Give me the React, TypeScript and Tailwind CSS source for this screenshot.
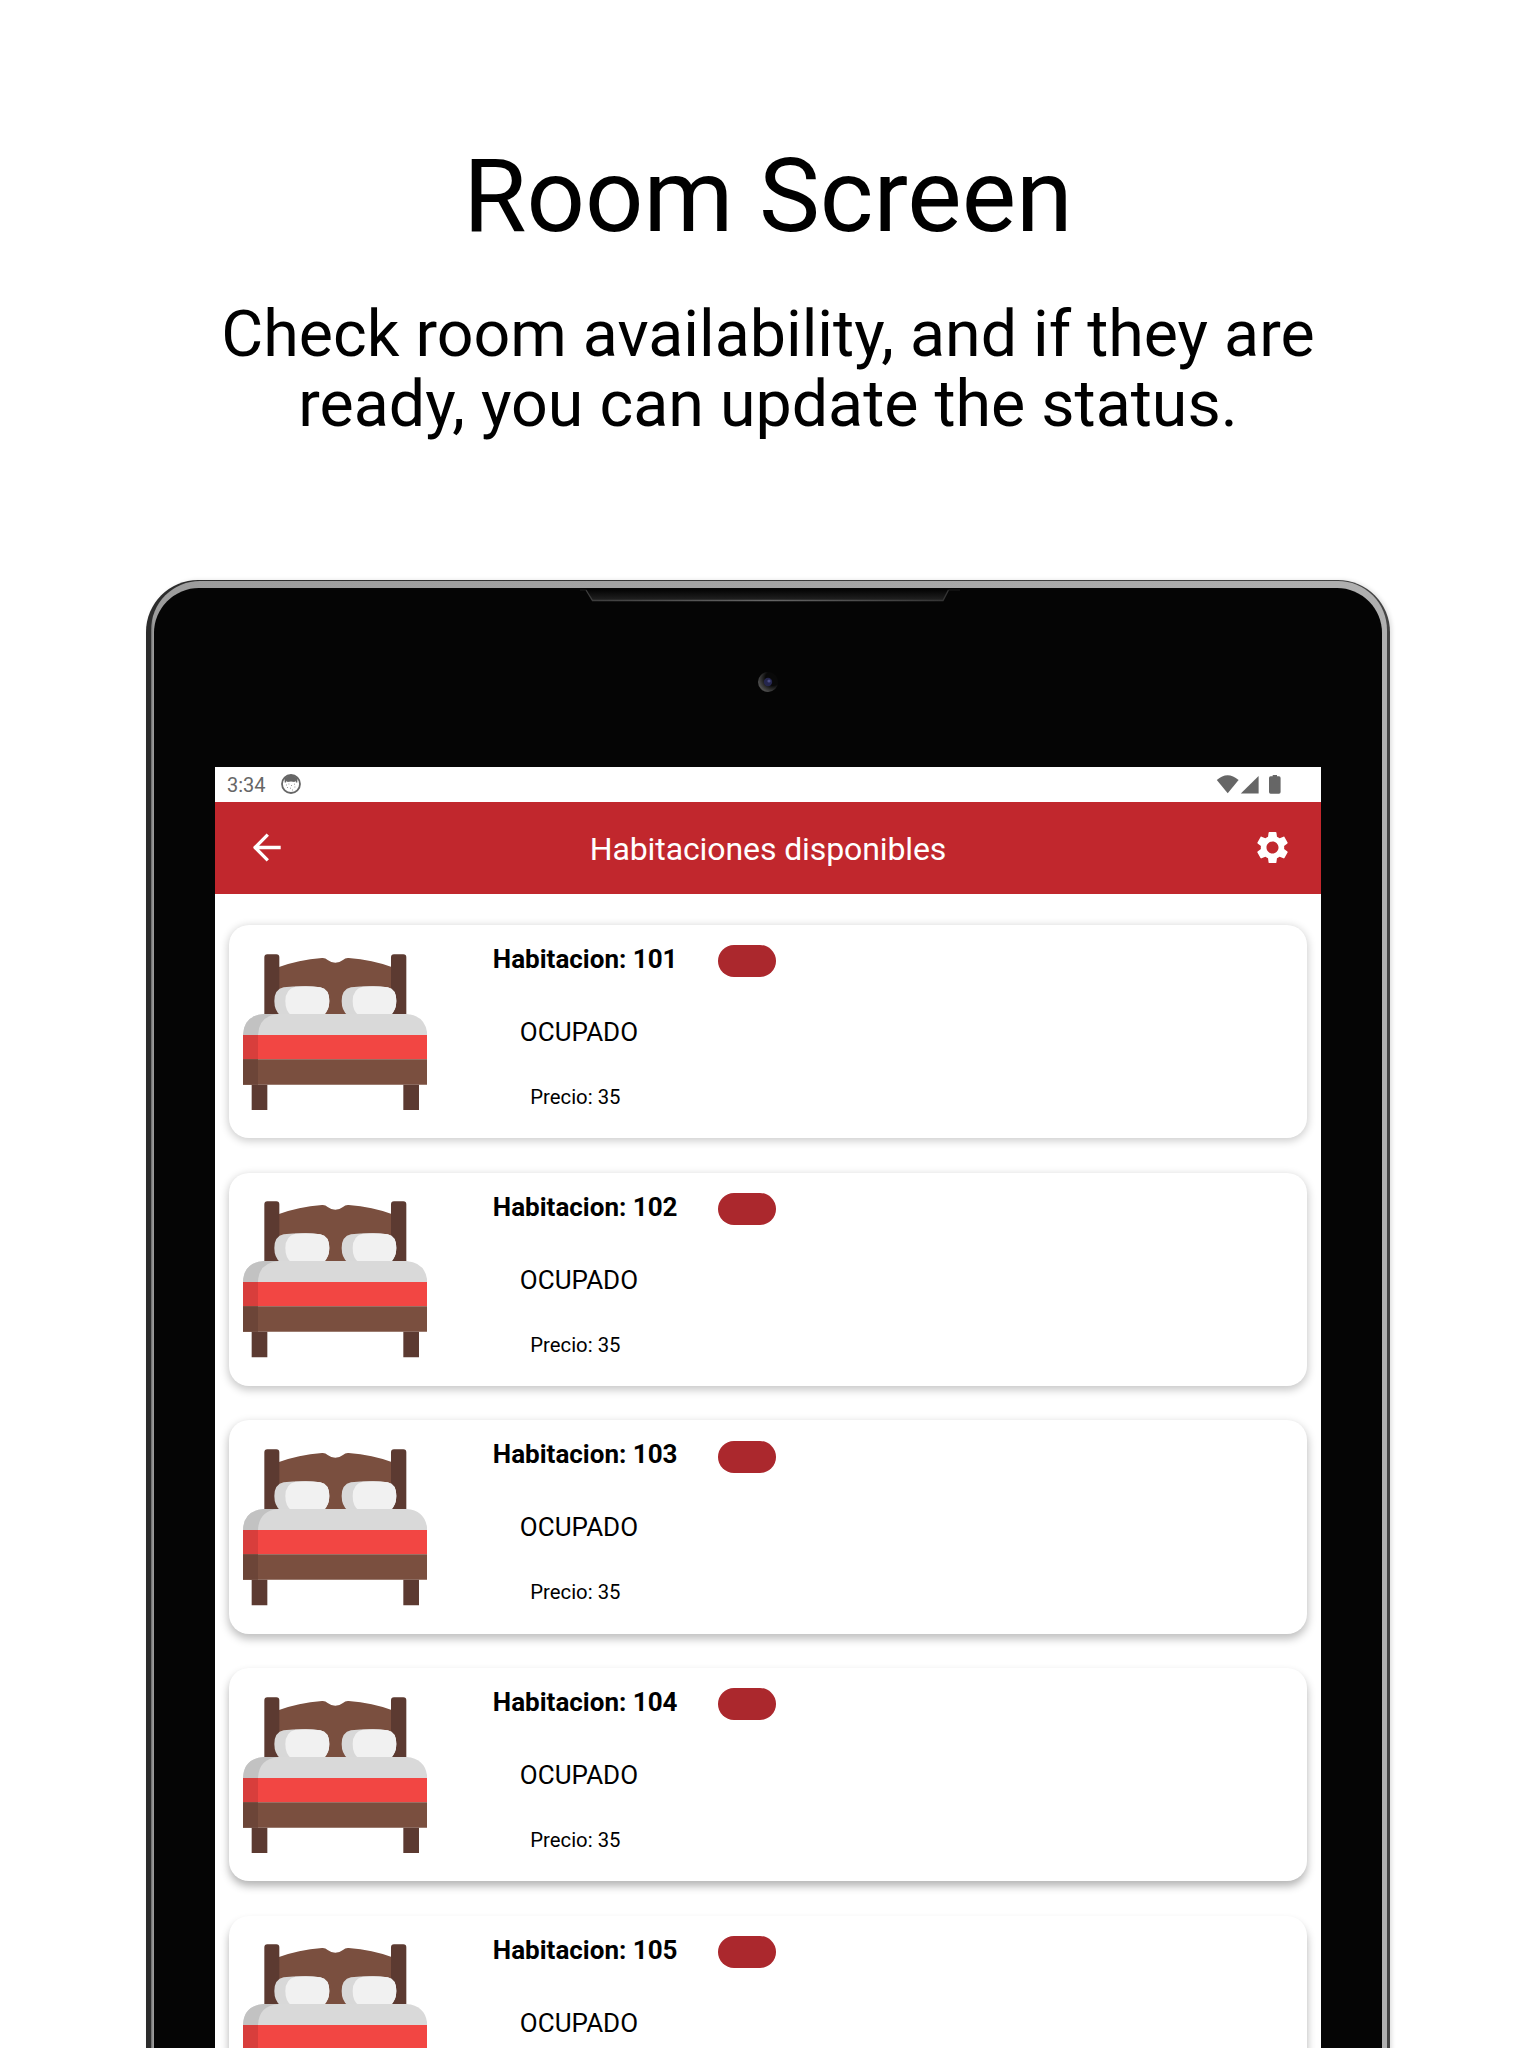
const rooms = [
  { number: 101, status: 'OCUPADO', price: 35, shadow: 'shadow-[0_2px_8px_1px_rgba(0,0,0,0.20)]' },
  { number: 102, status: 'OCUPADO', price: 35, shadow: 'shadow-[0_3px_8px_1px_rgba(0,0,0,0.22)]' },
  { number: 103, status: 'OCUPADO', price: 35, shadow: 'shadow-[0_4px_8px_1px_rgba(0,0,0,0.25)]' },
  { number: 104, status: 'OCUPADO', price: 35, shadow: 'shadow-[0_5px_9px_0px_rgba(0,0,0,0.30)]' },
  { number: 105, status: 'OCUPADO', price: 35, shadow: 'shadow-[0_6px_9px_0px_rgba(0,0,0,0.30)]' },
];

function Bed() {
  return (
    <svg className="ml-3.5 mt-[28.7px] h-[156.67px] w-[184.33px] shrink-0" viewBox="0 0 553 470">
      <path d="M108 39Q165 18 237 12Q247 11 254 18Q277 35 300 18Q307 11 317 12Q390 18 446 39V185H108Z" fill="#7a4f3f" />
      <path d="M64 184V10Q64 1 73 1H100Q109 1 109 10V184ZM444 184V10Q444 1 453 1H481Q490 1 490 10V184Z" fill="#5c3a31" />
      <path d="M112 184Q94 170 94 141Q94 106 122 100Q178 94 232 100Q259 105 259 141Q259 170 241 184ZM314 184Q296 170 296 141Q296 106 324 100Q380 94 434 100Q460 105 460 141Q460 170 442 184Z" fill="#d8d8d8" />
      <path d="M145 184Q127 171 127 141Q127 105 157 98Q200 95 232 100Q259 105 259 141Q259 170 241 184ZM347 184Q329 171 329 141Q329 105 359 98Q402 95 434 100Q460 105 460 141Q460 170 442 184Z" fill="#f1f1f1" />
      <path d="M0 243Q2 185 62 180H491Q549 185 553 243Z" fill="#d9d9d9" />
      <path d="M0 243Q2 185 62 180H107Q47 185 45 243Z" fill="#c2c2c2" />
      <path d="M0 243H553V316H0Z" fill="#f24643" />
      <path d="M0 243H45V316H0Z" fill="#d83e3c" />
      <path d="M0 316H553V392H0Z" fill="#7a4f3f" />
      <path d="M0 316H45V392H0Z" fill="#6c4538" />
      <path d="M26 392H73V469H26ZM481 392H528V469H481Z" fill="#5c3a31" />
    </svg>
  );
}

function RoomCard({ number, status, price, shadow }: (typeof rooms)[number]) {
  return (
    <article className={`flex h-[213.33px] shrink-0 rounded-[20px] bg-white text-black ${shadow}`}>
      <Bed />
      <div className="ml-[65.5px] flex flex-col">
        <div className="mt-[17px] flex h-[34px] items-center">
          <h2 className="w-[184px] whitespace-nowrap text-[26px] font-bold leading-[34px]">Habitacion: {number}</h2>
          <span className="ml-[41.5px] mt-[4.6px] h-8 w-[58px] rounded-[16px] bg-[#ab282d]" />
        </div>
        <p className="ml-[27px] mt-[39px] text-[26px] leading-[34px]">{status}</p>
        <p className="ml-[37.5px] mt-[34px] text-[20.3px] leading-[28px]">Precio: {price}</p>
      </div>
    </article>
  );
}

function StatusBar() {
  return (
    <div className="flex h-[34.5px] shrink-0 items-center pl-3 pr-[39.5px] text-[#666]">
      <span className="mt-[2px] w-[40px] text-[20px] leading-[34px]">3:34</span>
      <svg className="ml-[14px] h-5 w-5" viewBox="0 0 20 20">
        <circle cx="10" cy="10" r="9" fill="none" stroke="currentColor" strokeWidth="1.800" />
        <path d="M3.500 4.500Q10-2.500 16.500 4.500L16.300 8.400H15L14.300 6.800 13.500 8Q10 7.200 6.500 8L5.700 6.800 5 8.400H3.700Z" fill="currentColor" />
        <path d="M5 11h.8M7.500 10h.8M10 11.500h.8M13 10.200h.8M6 13.500h.8M9 14.200h.8M13.500 13h.8M11 16h.8" stroke="currentColor" strokeWidth=".8" />
      </svg>
      <svg className="ml-auto h-[34px] w-[66px]" viewBox="0 0 66 34" fill="currentColor">
        <path d="M.8 13Q11.500 3.500 22.600 13L11.700 26.300Z" />
        <path d="M42.600 9V26.500H24.800Z" />
        <path d="M56.700 8H61V9.300H63Q64.600 9.300 64.600 11V25Q64.600 26.800 63 26.800H54.600Q53 26.800 53 25V11Q53 9.300 54.600 9.300H56.700Z" />
      </svg>
    </div>
  );
}

function AppHeader() {
  return (
    <header className="flex h-[92px] shrink-0 items-center justify-between bg-[#c1272d] pl-[30px] pr-[27px] text-white">
      <svg className="h-11 w-11" viewBox="0 0 44 44" fill="none" stroke="currentColor" strokeWidth="3.300" strokeLinejoin="round">
        <path d="M22.800 8.700 10 21.500 22.800 34.300M10.500 21.500H35.700" />
      </svg>
      <h1 className="mr-[3px] mt-[2px] text-[32px] leading-[40px] tracking-[-0.1px]">Habitaciones disponibles</h1>
      <div className="flex w-11 justify-center">
        <svg className="h-[39px] w-[39px]" viewBox="0 0 24 24" fill="currentColor">
          <path d="M19.140 12.940c.04-.3.060-.61.060-.94 0-.32-.02-.64-.07-.94l2.030-1.580c.18-.14.230-.41.120-.61l-1.920-3.320c-.12-.22-.37-.29-.59-.22l-2.390.96c-.5-.38-1.030-.7-1.620-.94l-.36-2.540c-.04-.24-.24-.41-.48-.41h-3.840c-.24 0-.43.170-.47.410l-.36 2.540c-.59.240-1.130.570-1.620.940l-2.390-.96c-.22-.08-.47 0-.59.220L2.740 8.870c-.12.210-.08.470.120.610l2.030 1.580c-.05.300-.09.630-.09.940s.02.640.070.940l-2.030 1.580c-.18.140-.23.410-.12.610l1.920 3.320c.12.220.370.290.590.220l2.390-.96c.5.380 1.030.700 1.620.940l.36 2.540c.05.240.240.410.480.410h3.840c.24 0 .44-.17.470-.41l.36-2.540c.59-.24 1.130-.56 1.620-.94l2.390.960c.22.080.470 0 .59-.22l1.920-3.320c.12-.22.070-.47-.12-.61l-2.010-1.580zM12 15.700c-2.040 0-3.700-1.660-3.700-3.700s1.660-3.700 3.700-3.700 3.700 1.660 3.700 3.700-1.660 3.700-3.700 3.700z" />
        </svg>
      </div>
    </header>
  );
}

function TabletHardware() {
  return (
    <svg className="absolute left-[426px] top-0 h-[110px] w-[380px]" viewBox="0 0 380 110">
      <defs>
        <radialGradient id="lens" cx="75%" cy="30%" r="75%">
          <stop offset="0.5" stopColor="#090909" />
          <stop offset="1" stopColor="#4c4c4c" />
        </radialGradient>
        <linearGradient id="speaker" x1="0" x2="0" y1="0" y2="1">
          <stop offset="0" stopColor="#050505" />
          <stop offset="1" stopColor="#222" />
        </linearGradient>
        <linearGradient id="speakerEdge" x1="0" x2="1" y1="0" y2="0">
          <stop offset="0" stopColor="#3c3c3c" />
          <stop offset="0.5" stopColor="#666" />
          <stop offset="1" stopColor="#333" />
        </linearGradient>
      </defs>
      <path d="M6 2 12.500 12.500H363L368.500 2Z" fill="url(#speaker)" />
      <path d="M6 2 12.500 12.500H363L368.500 2" fill="none" stroke="url(#speakerEdge)" strokeWidth="1.300" />
      <path d="M0 2H6M368.500 2H380" stroke="#1c1c1c" />
      <circle cx="188" cy="94" r="10" fill="url(#lens)" />
      <circle cx="188" cy="94" r="4.200" fill="#25264d" />
      <circle cx="189" cy="93" r="1.600" fill="#4b4d86" />
    </svg>
  );
}

export default function App() {
  return (
    <main className="flex h-[2048px] w-[1536px] flex-col overflow-hidden bg-white font-[Roboto,sans-serif] text-black">
      <section className="flex h-[579.5px] shrink-0 flex-col items-center pt-[136px] text-center">
        <h1 className="text-[102.6px] leading-[120px]">Room Screen</h1>
        <p className="mt-[43px] text-[64.5px] leading-[70px]">
          Check room availability, and if they are
          <br />
          ready, you can update the status.
        </p>
      </section>
      <div className="ml-[146px] h-[1600px] w-[1244px] shrink-0 rounded-t-[52px] bg-[linear-gradient(to_right,#2b2b2b,#444)] pl-[5px] pr-[3px] pt-[1.5px] shadow-[2px_0_4px_rgba(0,0,0,0.12)]">
        <div className="h-full rounded-t-[49px] bg-[linear-gradient(to_right,#666_0px,#9c9c9c_2px,#a4a4a4_50%,#b0b0b0)] pl-[3px] pr-[5px] pt-[7px]">
          <div className="relative h-full rounded-t-[45px] bg-[#050505] pl-[61px] pr-[61px] pt-[179px]">
            <TabletHardware />
            <div className="flex h-full flex-col overflow-hidden bg-white">
              <StatusBar />
              <AppHeader />
              <div className="flex flex-col gap-[34.33px] px-3.5 pt-[31.5px]">
                {rooms.map((room) => (
                  <RoomCard key={room.number} {...room} />
                ))}
              </div>
            </div>
          </div>
        </div>
      </div>
    </main>
  );
}
